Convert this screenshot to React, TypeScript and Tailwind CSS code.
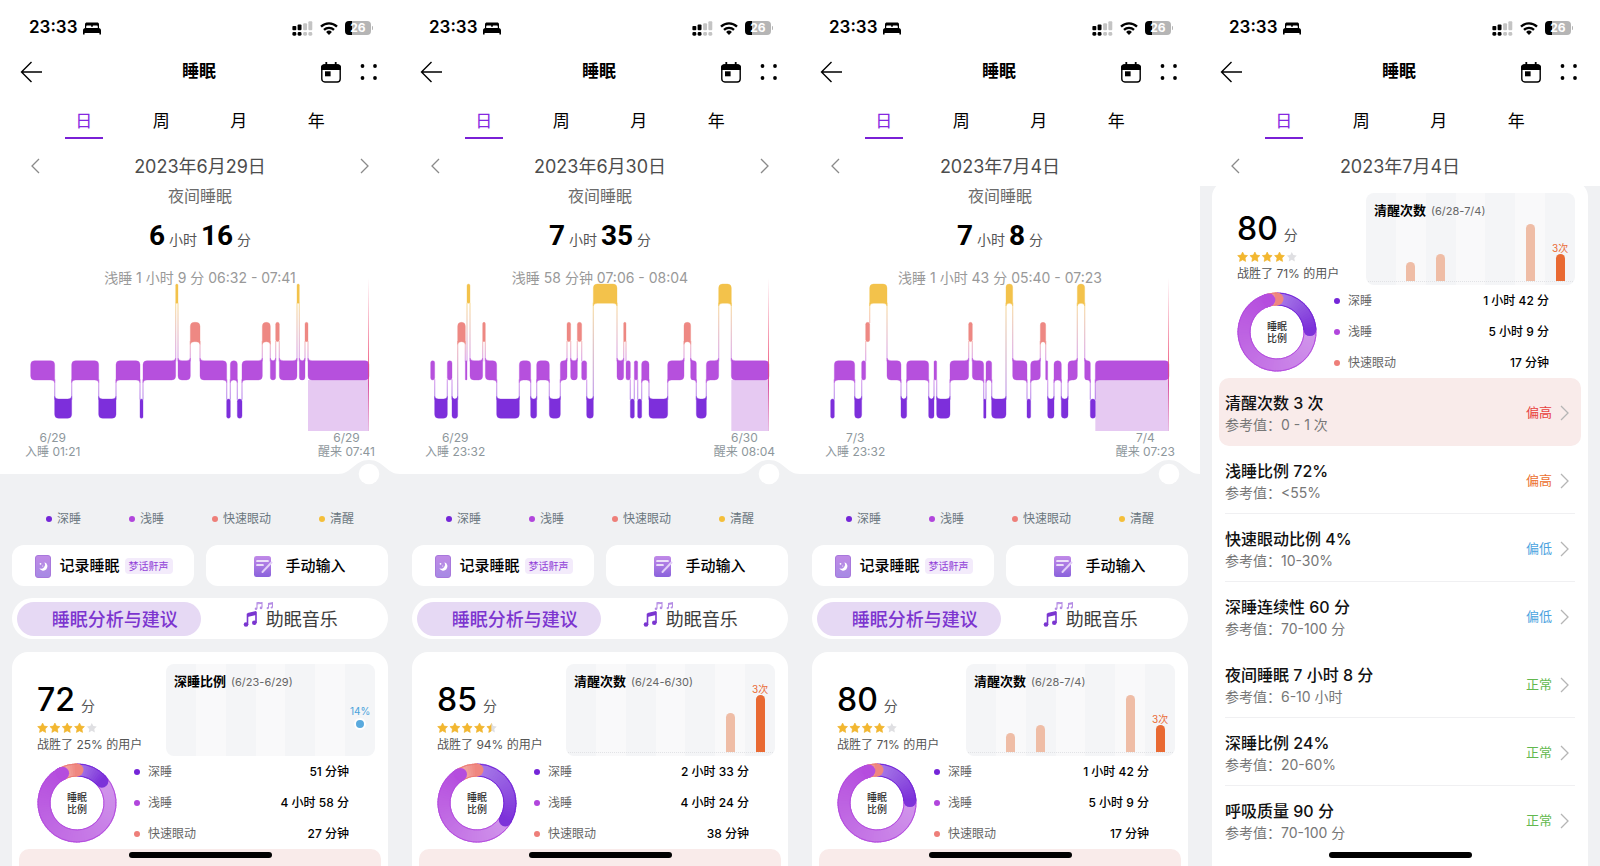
import clsx from 'clsx';

type Stage = 'A' | 'R' | 'L' | 'D';

interface Bar {
  slot: number;
  height: string;
  current?: boolean;
}

interface Score {
  points: number;
  stars: number;
  beat: number;
  trendTitle: string;
  trendRange: string;
  bars: Bar[];
  dot?: string;
  durations: [string, string, string];
  minutes: [number, number, number];
}

interface Night {
  date: string;
  hasNext: boolean;
  hours: number;
  mins: number;
  picked: string;
  stages: string;
  from: [string, string];
  to: [string, string];
  score: Score;
}

// Each stage is a letter plus the x where it ends, on a 1200 unit wide night
const NIGHTS: Night[] = [
  {
    date: '2023年6月29日',
    hasNext: true,
    hours: 6,
    mins: 16,
    picked: '浅睡 1 小时 9 分 06:32 - 07:41',
    stages:
      'L164 D215 L296 D348 L420 D429 L527 A534 L571 R600 L680 D691 L712 D726 L787 R811 L827 R838 L891 A898 L915 R924 L1107',
    from: ['6/29', '入睡 01:21'],
    to: ['6/29', '醒来 07:41'],
    score: {
      points: 72,
      stars: 4,
      beat: 25,
      trendTitle: '深睡比例',
      trendRange: '(6/23-6/29)',
      bars: [],
      dot: '14%',
      durations: ['51 分钟', '4 小时 58 分', '27 分钟'],
      minutes: [51, 298, 27],
    },
  },
  {
    date: '2023年6月30日',
    hasNext: true,
    hours: 7,
    mins: 35,
    picked: '浅睡 58 分钟 07:06 - 08:04',
    stages:
      'L104 D142 L156 D173 R196 L201 A210 L248 R256 L290 D358 L392 D410 L448 D481 L501 R512 L532 R545 L560 D580 A651 L671 R678 L691 D703 L713 D725 L747 D803 L852 R872 L889 D919 L956 A994 L1107',
    from: ['6/29', '入睡 23:32'],
    to: ['6/30', '醒来 08:04'],
    score: {
      points: 85,
      stars: 4.5,
      beat: 94,
      trendTitle: '清醒次数',
      trendRange: '(6/24-6/30)',
      bars: [
        { slot: 5, height: 'h-[39px]' },
        { slot: 6, height: 'h-[57px]', current: true },
      ],
      durations: ['2 小时 33 分', '4 小时 24 分', '38 分钟'],
      minutes: [153, 264, 38],
    },
  },
  {
    date: '2023年7月4日',
    hasNext: false,
    hours: 7,
    mins: 8,
    picked: '浅睡 1 小时 43 分 05:40 - 07:23',
    stages:
      'D103 L164 D185 L197 R209 A261 L303 D320 L386 D402 L410 D450 L506 R517 L551 D558 L575 D618 A638 L681 D692 L721 R737 L743 D762 L784 D804 L832 A854 L871 D886 L1107',
    from: ['7/3', '入睡 23:32'],
    to: ['7/4', '醒来 07:23'],
    score: {
      points: 80,
      stars: 4,
      beat: 71,
      trendTitle: '清醒次数',
      trendRange: '(6/28-7/4)',
      bars: [
        { slot: 1, height: 'h-[19px]' },
        { slot: 2, height: 'h-[27px]' },
        { slot: 5, height: 'h-[57px]' },
        { slot: 6, height: 'h-[27px]', current: true },
      ],
      durations: ['1 小时 42 分', '5 小时 9 分', '17 分钟'],
      minutes: [102, 309, 17],
    },
  },
];

const METRICS = [
  { title: '清醒次数 3 次', ref: '0 - 1 次', status: '偏高', color: 'text-[#e8403c]', alert: true, line: false },
  { title: '浅睡比例 72%', ref: '<55%', status: '偏高', color: 'text-[#ec7030]', line: true },
  { title: '快速眼动比例 4%', ref: '10-30%', status: '偏低', color: 'text-[#4ba3e0]', line: true },
  { title: '深睡连续性 60 分', ref: '70-100 分', status: '偏低', color: 'text-[#4ba3e0]', line: false },
  { title: '夜间睡眠 7 小时 8 分', ref: '6-10 小时', status: '正常', color: 'text-[#62b84e]', line: true },
  { title: '深睡比例 24%', ref: '20-60%', status: '正常', color: 'text-[#62b84e]', line: true },
  { title: '呼吸质量 90 分', ref: '70-100 分', status: '正常', color: 'text-[#62b84e]', line: false },
];

const LEGEND = [
  { name: '深睡', dot: 'bg-[#7426d8]' },
  { name: '浅睡', dot: 'bg-[#b146dc]' },
  { name: '快速眼动', dot: 'bg-[#ee7f79]' },
  { name: '清醒', dot: 'bg-[#f4bf3a]' },
];

const STAGE_TOP: Record<Stage, number> = { A: 30, R: 145, L: 260, D: 375 };
const STAGE_COLOR: Record<Stage, string> = { A: '#f3c24b', R: '#ee8883', L: '#b650dd', D: '#7d2fdb' };
const BLOCK = 58;

function StatusBar() {
  return (
    <div className="flex h-[54px] items-center justify-between pt-0.5 pr-[27px] pl-[29px]">
      <div className="flex items-center gap-1.5">
        <span className="text-[17px] font-semibold">23:33</span>
        <svg viewBox="0 0 18 13" className="h-[13px] w-[18px]">
          <path d="M2 6V2.2C2 1 2.8.4 4 .4h10c1.200 0 2 .6 2 1.800V6h-1.200V4.600c0-.8-.5-1.200-1.200-1.200h-3c-.6 0-1 .4-1 1V5H8.400v-.6c0-.6-.4-1-1-1h-3c-.7 0-1.200.4-1.200 1.200V6z" />
          <path d="M0 8.600C0 7 .9 6 2.500 6h13C17.100 6 18 7 18 8.600V12.500h-1.600V11H1.600v1.500H0z" />
        </svg>
      </div>
      <div className="flex items-center gap-[7px]">
        <svg viewBox="0 0 62 46" className="h-[15px] w-[21px]">
          <g fill="#000">
            <rect x="0" y="15" width="12" height="13" rx="3" />
            <rect x="16" y="11" width="12" height="17" rx="3" />
            <rect x="0" y="34" width="12" height="11" rx="4" />
            <rect x="16" y="34" width="12" height="11" rx="4" />
          </g>
          <g fill="#c4c4c4">
            <rect x="33" y="7" width="12" height="21" rx="3" />
            <rect x="49" y="1" width="12" height="27" rx="3" />
            <rect x="33" y="34" width="12" height="11" rx="4" />
            <rect x="49" y="34" width="12" height="11" rx="4" />
          </g>
        </svg>
        <svg viewBox="0 0 18 13" className="h-[13px] w-[18px]" fill="none" stroke="#000" strokeWidth="2.300">
          <path d="M1 4.600a11.500 11.500 0 0 1 16 0" />
          <path d="M4 7.800a7.200 7.200 0 0 1 10 0" />
          <path d="M9 13 6.100 10a4.200 4.200 0 0 1 5.800 0z" fill="#000" stroke="none" />
        </svg>
        <div className="flex items-center gap-px">
          <div className="flex h-[14px] w-[26px] items-center justify-center rounded-[4px] bg-linear-to-r from-black from-26% to-[#b5b5b5] to-26% text-[12px] font-bold text-white">
            26
          </div>
          <div className="h-1 w-px rounded-r bg-[#b5b5b5]" />
        </div>
      </div>
    </div>
  );
}

function Chevron({ flip, className }: { flip?: boolean; className?: string }) {
  return (
    <svg viewBox="0 0 9 16" className={clsx('h-4 w-[9px]', className)} fill="none" stroke="currentColor" strokeWidth="1.300">
      <path d={flip ? 'M8 1 1 8l7 7' : 'M1 1l7 7-7 7'} />
    </svg>
  );
}

function Header({ date, hasNext }: { date: string; hasNext: boolean }) {
  return (
    <header className="bg-white">
      <StatusBar />
      <div className="grid h-9 grid-cols-[1fr_auto_1fr] items-center pr-[22px] pl-5">
        <button type="button" aria-label="返回" className="w-fit">
          <svg viewBox="0 0 22 22" className="size-[22px]" fill="none" stroke="#000" strokeWidth="1.400">
            <path d="M11.500 1 1.500 11l10 10M1.500 11H22" />
          </svg>
        </button>
        <h1 className="text-[17px] font-bold">睡眠</h1>
        <div className="flex items-center justify-end gap-[19px]">
          <button type="button" aria-label="选择日期">
            <svg viewBox="0 0 20 21" className="h-[21px] w-5">
              <rect x=".8" y="3" width="18.400" height="17" rx="3" fill="none" stroke="#000" strokeWidth="1.400" />
              <path d="M0 8V5.500C0 3.500 1.500 2.300 3.500 2.300h13c2 0 3.500 1.200 3.500 3.200V8z" />
              <path d="M5.300 0v3M14.700 0v3" stroke="#000" strokeWidth="1.800" />
              <rect x="4" y="9.300" width="5.600" height="5" />
            </svg>
          </button>
          <button type="button" aria-label="更多">
            <svg viewBox="0 0 18 16" className="h-4 w-[18px]">
              <circle cx="2.500" cy="2" r="1.900" />
              <circle cx="15" cy="2" r="1.900" />
              <circle cx="2.500" cy="14" r="1.900" />
              <circle cx="15" cy="14" r="1.900" />
            </svg>
          </button>
        </div>
      </div>
      <nav className="grid grid-cols-4 px-[45px] pt-[18px]">
        {['日', '周', '月', '年'].map((tab, i) => (
          <button
            key={tab}
            type="button"
            className={clsx(
              'w-[38px] justify-self-center border-b-2 pb-[3px] text-[17px] leading-[26px]',
              i === 0 ? 'border-[#7a20d6] text-[#8526e0]' : 'border-transparent text-black'
            )}
          >
            {tab}
          </button>
        ))}
      </nav>
      <div className="flex h-[47px] items-center justify-between px-[31px] pt-[7px] text-[#8a8a8a]">
        <button type="button" aria-label="前一天">
          <Chevron flip />
        </button>
        <span className="text-[18px] text-[#4d4d4d]">{date}</span>
        <button type="button" aria-label="后一天" className={hasNext ? '' : 'invisible'}>
          <Chevron />
        </button>
      </div>
    </header>
  );
}

function parseStages(stages: string) {
  let x = 92;
  return stages.split(' ').map((s) => {
    const block = { stage: s[0] as Stage, x0: x, x1: Number(s.slice(1)) };
    x = block.x1;
    return block;
  });
}

// Corners on the side of a neighbour flare out towards it, the others are rounded
function blockPath(x0: number, x1: number, y: number, prev: number, next: number) {
  const w = x1 - x0;
  const r = Math.min(12, w / 2);
  const f = w > 15 ? 8 : 0;
  const b = y + BLOCK;
  return [
    prev < y && w > 15 ? `M${x0} ${y - f}Q${x0 + 1} ${y} ${x0 + r} ${y}` : `M${x0} ${y + r}Q${x0} ${y} ${x0 + r} ${y}`,
    next < y && w > 15 ? `H${x1 - r}Q${x1 - 1} ${y} ${x1} ${y - f}` : `H${x1 - r}Q${x1} ${y} ${x1} ${y + r}`,
    next > y && w > 15 ? `V${b + f}Q${x1 - 1} ${b} ${x1 - r} ${b}` : `V${b - r}Q${x1} ${b} ${x1 - r} ${b}`,
    prev > y && w > 15 ? `H${x0 + r}Q${x0 + 1} ${b} ${x0} ${b + f}` : `H${x0 + r}Q${x0} ${b} ${x0} ${b - r}`,
    'Z',
  ].join('');
}

function SleepChart({ id, stages }: { id: string; stages: string }) {
  const blocks = parseStages(stages);
  const last = blocks[blocks.length - 1];

  return (
    <svg viewBox="0 0 1200 471" className="-mt-[14px] block w-full">
      <defs>
        {blocks.slice(1).map((b, i) => {
          const a = blocks[i];
          const [hi, lo] = STAGE_TOP[a.stage] < STAGE_TOP[b.stage] ? [a, b] : [b, a];
          return (
            <linearGradient key={i} id={`${id}-${i}`} x1="0" y1="0" x2="0" y2="1">
              <stop offset="0" stopColor={STAGE_COLOR[hi.stage]} />
              <stop offset="1" stopColor={STAGE_COLOR[lo.stage]} />
            </linearGradient>
          );
        })}
        <linearGradient id={`${id}-now`} x1="0" y1="0" x2="0" y2="1">
          <stop offset="0" stopColor="#ee4a72" stopOpacity="0" />
          <stop offset=".55" stopColor="#ee4a72" stopOpacity=".8" />
          <stop offset=".7" stopColor="#d63a90" stopOpacity=".8" />
          <stop offset="1" stopColor="#ee4a72" stopOpacity=".1" />
        </linearGradient>
      </defs>
      <rect x={last.x0} y="318" width={last.x1 - last.x0} height="153" fill="#e6c9f2" />
      {blocks.slice(1).map((b, i) => {
        const ya = STAGE_TOP[blocks[i].stage];
        const yb = STAGE_TOP[b.stage];
        const top = Math.min(ya, yb) + BLOCK - 2;
        return (
          <rect
            key={i}
            x={b.x0 - 2}
            y={top}
            width="4"
            height={Math.max(ya, yb) - top + 2}
            fill={`url(#${id}-${i})`}
            opacity=".45"
          />
        );
      })}
      {blocks.map((b, i) => {
        const y = STAGE_TOP[b.stage];
        const prev = i > 0 ? STAGE_TOP[blocks[i - 1].stage] : y;
        const next = i < blocks.length - 1 ? STAGE_TOP[blocks[i + 1].stage] : y;
        return (
          <path
            key={i}
            d={blockPath(b.x0, b.x1, y, prev, next)}
            fill={STAGE_COLOR[b.stage]}
            stroke={STAGE_COLOR[b.stage]}
            strokeWidth="1"
          />
        );
      })}
      <rect x="1104" y="12" width="3" height="459" fill={`url(#${id}-now)`} />
    </svg>
  );
}

function Legend() {
  return (
    <ul className="flex h-12 items-center justify-between px-[46px] text-[12px] text-[#6b7780]">
      {LEGEND.map((item) => (
        <li key={item.name} className="flex items-center gap-[5px]">
          <span className={clsx('size-1.5 rounded-full', item.dot)} />
          {item.name}
        </li>
      ))}
    </ul>
  );
}

function Actions({ id }: { id: string }) {
  return (
    <div className="space-y-3 px-3">
      <div className="grid grid-cols-2 gap-3">
        <button type="button" className="flex h-[41px] items-center justify-center rounded-xl bg-white pt-px pl-0.5">
          <svg viewBox="0 0 16 23" className="mr-2 h-[23px] w-4">
            <defs>
              <linearGradient id={`${id}-rec`} x1="0" y1="0" x2="0" y2="1">
                <stop offset="0" stopColor="#c08ae6" />
                <stop offset="1" stopColor="#a58ae4" />
              </linearGradient>
            </defs>
            <rect x=".5" y=".5" width="15" height="22" rx="2.500" fill={`url(#${id}-rec)`} stroke="#a878dc" />
            <path d="M9.500 7.300a4.300 4.300 0 1 1-5.200 6 4.200 4.200 0 0 0 5.200-6z" fill="#fff" />
            <circle cx="5.500" cy="8.800" r=".9" fill="#fff" />
            <circle cx="7.700" cy="11" r=".6" fill="#fff" />
          </svg>
          <span className="text-[15px] font-medium">记录睡眠</span>
          <span className="ml-[5px] rounded bg-[#f3ebfb] px-1 text-[10px] leading-4 text-[#9243d8]">梦话鼾声</span>
        </button>
        <button
          type="button"
          className="flex h-[41px] items-center justify-center gap-3 rounded-xl bg-white pt-px pl-1.5"
        >
          <svg viewBox="0 0 19 21" className="h-[21px] w-[19px]">
            <defs>
              <linearGradient id={`${id}-pen`} x1="0" y1="0" x2="0" y2="1">
                <stop offset="0" stopColor="#c18ae8" />
                <stop offset="1" stopColor="#8a62dc" />
              </linearGradient>
            </defs>
            <rect width="17" height="21" rx="2.500" fill={`url(#${id}-pen)`} />
            <path d="M3 5h11M3 9h6" stroke="#fff" strokeWidth="1.700" strokeLinecap="round" />
            <path d="m8.500 16 9-9.500" stroke="#e3cff8" strokeWidth="2" strokeLinecap="round" />
          </svg>
          <span className="text-[15px] font-medium">手动输入</span>
        </button>
      </div>
      <div className="grid h-[41px] grid-cols-2 rounded-full bg-white p-1 pl-[5px]">
        <button type="button" className="rounded-full bg-[#e6d9f4] pl-3 text-[18px] font-medium text-[#7c35cf]">
          睡眠分析与建议
        </button>
        <button type="button" className="flex items-center justify-center gap-[7px] pr-1 text-[18px] text-[#3d3d3d]">
          <svg viewBox="0 0 30 34" className="-mr-[24px] h-[34px] w-[30px] self-start">
            <path d="M4.500 23V12.500L13 10.500V21" fill="none" stroke="#7a35d0" strokeWidth="1.600" />
            <path d="M4.500 11 13 9v4L4.500 15z" fill="#7a35d0" />
            <circle cx="3" cy="22.500" r="2.300" fill="#7a35d0" />
            <circle cx="11.300" cy="20.700" r="2.300" fill="#7a35d0" />
            <g fill="none" stroke="#b48ce4" strokeWidth="1.100">
              <path d="M14 6.500V.8l5-.8v5.500M25.500 6V1.400l4-.7v4.600M14 2l5-.8M25.500 2.500l4-.7" />
            </g>
            <g fill="#b48ce4">
              <circle cx="13" cy="6.800" r="1.300" />
              <circle cx="18" cy="5.900" r="1.300" />
              <circle cx="24.700" cy="6.200" r="1.100" />
              <circle cx="28.700" cy="5.500" r="1.100" />
            </g>
          </svg>
          <span className="pl-2.5">助眠音乐</span>
        </button>
      </div>
    </div>
  );
}

const STAR = 'M5 0 6.530 3.100 9.950 3.600 7.470 6 8.060 9.400 5 7.800 1.940 9.400 2.530 6 .05 3.600 3.470 3.100z';

function Stars({ id, value }: { id: string; value: number }) {
  return (
    <svg viewBox="0 0 60 10" className="h-2.5 w-[60px]" role="img" aria-label={`${value} 星`}>
      <clipPath id={`${id}-stars`}>
        <rect width={value * 12.3 - (value % 1 ? 1 : 0)} height="10" />
      </clipPath>
      {[0, 1, 2, 3, 4].map((i) => (
        <path key={i} d={STAR} transform={`translate(${i * 12.3 + 0.6} 0)`} fill="#dfdfe2" />
      ))}
      <g clipPath={`url(#${id}-stars)`} strokeLinejoin="round">
        {[0, 1, 2, 3, 4].map((i) => (
          <path
            key={i}
            d={STAR}
            transform={`translate(${i * 12.3 + 0.6} 0)`}
            fill="#f3b72f"
            stroke="#f3b72f"
            strokeWidth=".6"
          />
        ))}
      </g>
    </svg>
  );
}

function point(angle: number, r: number) {
  const rad = ((angle - 90) * Math.PI) / 180;
  return [40 + r * Math.cos(rad), 40 + r * Math.sin(rad)];
}

function mix(from: number[], to: number[], t: number) {
  return `rgb(${from.map((c, i) => Math.round(c + (to[i] - c) * t)).join(',')})`;
}

// A ring piece whose colour runs along the arc, closed by a round cap
function Arc({ start, end, from, to, edge }: { start: number; end: number; from: number[]; to: number[]; edge: string }) {
  const n = Math.max(2, Math.ceil((end - start) / 4));
  const step = (end - start) / n;
  const arc = (a: number, b: number, r: number) => {
    const [x0, y0] = point(a, r);
    const [x1, y1] = point(b, r);
    return `M${x0} ${y0}A${r} ${r} 0 ${b - a > 180 ? 1 : 0} 1 ${x1} ${y1}`;
  };
  const [cx, cy] = point(end, 33);
  return (
    <g fill="none">
      <circle cx={cx} cy={cy} r="6.500" fill={mix(from, to, 1)} />
      {Array.from({ length: n }, (_, i) => (
        <path
          key={i}
          d={arc(start + i * step, Math.min(end, start + (i + 1) * step + 2), 33)}
          stroke={mix(from, to, i / (n - 1))}
          strokeWidth="13"
        />
      ))}
      <path d={arc(start, end, 39)} stroke={edge} strokeWidth="1" />
      <path d={arc(start, end, 27)} stroke={edge} strokeWidth="1" />
    </g>
  );
}

function Donut({ minutes }: { minutes: [number, number, number] }) {
  const total = minutes[0] + minutes[1] + minutes[2];
  const deep = (minutes[0] / total) * 360;
  const light = deep + (minutes[1] / total) * 360;
  const lightEnd = [181, 77, 222];

  return (
    <div className="grid size-20 place-items-center">
      <svg viewBox="0 0 80 80" className="size-20 [grid-area:1/1]">
        <Arc start={deep} end={light} from={[209, 150, 235]} to={lightEnd} edge="#b44cdf" />
        <Arc start={0} end={deep} from={[168, 124, 232]} to={[125, 50, 217]} edge="#7426d8" />
        <Arc start={light} end={360} from={[244, 178, 172]} to={[239, 134, 127]} edge="#ec7b74" />
        <Arc start={light - 8} end={light} from={lightEnd} to={lightEnd} edge="#b44cdf" />
      </svg>
      <span className="w-6 text-center text-[10px] leading-3 font-medium text-[#333] [grid-area:1/1]">睡眠 比例</span>
    </div>
  );
}

function TrendPanel({ score }: { score: Score }) {
  return (
    <div className="grid h-[92px] overflow-hidden rounded-lg bg-[#f4f5f7]">
      <div className="grid grid-cols-7 [grid-area:1/1]">
        {[0, 1, 2, 3, 4, 5, 6].map((slot) => {
          const bar = score.bars.find((b) => b.slot === slot);
          return (
            <div
              key={slot}
              className={clsx('flex flex-col items-center justify-end pb-1', slot % 2 === 1 && 'bg-[#f9f9fa]')}
            >
              {bar?.current && <span className="text-[10px] leading-3 whitespace-nowrap text-[#ea6a35]">3次</span>}
              {bar && (
                <span
                  className={clsx('w-[9px] rounded-t-full', bar.height, bar.current ? 'bg-[#e96a33]' : 'bg-[#efbda6]')}
                />
              )}
              {score.dot && slot === 6 && (
                <>
                  <span className="text-[10px] leading-[14px] text-[#4ba3dc]">{score.dot}</span>
                  <span className="mb-[22px] size-3 rounded-full border-2 border-white bg-[#5aaade]" />
                </>
              )}
            </div>
          );
        })}
      </div>
      {score.bars.length > 0 && (
        <div className="mb-[3px] self-end border-b border-dotted border-[#e2e3e6] [grid-area:1/1]" />
      )}
      <div className="flex h-9 items-center gap-[5px] pl-2 [grid-area:1/1]">
        <span className="text-[13px] font-bold">{score.trendTitle}</span>
        <span className="text-[11px] text-[#666]">{score.trendRange}</span>
      </div>
    </div>
  );
}

function ScoreCard({ id, score, children }: { id: string; score: Score; children: React.ReactNode }) {
  return (
    <section className="mx-3 rounded-2xl bg-white pt-3 pb-8">
      <div className="grid grid-cols-[154px_1fr] pr-[13px]">
        <div className="pt-[17px] pl-[25px]">
          <div className="flex items-baseline gap-1.5">
            <span className="text-[32px] leading-[38px] font-medium">{score.points}</span>
            <span className="text-[14px] text-[#555]">分</span>
          </div>
          <div className="flex h-[18px] items-center">
            <Stars id={id} value={score.stars} />
          </div>
          <p className="text-[12px] leading-4 whitespace-nowrap text-[#555]">战胜了 {score.beat}% 的用户</p>
        </div>
        <TrendPanel score={score} />
      </div>
      <div className="flex items-center gap-[9px] pr-[39px] pl-[25px]">
        <Donut minutes={score.minutes} />
        <ul className="flex-1 pl-2 text-[12px]">
          {score.durations.map((duration, i) => (
            <li key={i} className="flex h-[31px] items-center gap-2">
              <span className={clsx('size-1.5 rounded-full', LEGEND[i].dot)} />
              <span className="flex-1 text-[#666]">{LEGEND[i].name}</span>
              <span className="font-medium text-black">{duration}</span>
            </li>
          ))}
        </ul>
      </div>
      {children}
    </section>
  );
}

function MetricList() {
  return (
    <ul className="px-[7px]">
      {METRICS.map((m) => (
        <li key={m.title} className={clsx('px-1.5', m.alert && 'rounded-[10px] bg-[#f9ebea]')}>
          <button
            type="button"
            className={clsx(
              'flex h-[68px] w-full items-center justify-between border-b pt-0.5 pr-1.5 text-left',
              m.line ? 'border-[#f0f0f2]' : 'border-transparent'
            )}
          >
            <span>
              <span className="block text-[16px] leading-6 font-medium text-[#111]">{m.title}</span>
              <span className="block text-[14px] leading-5 text-[#777]">参考值：{m.ref}</span>
            </span>
            <span className={clsx('flex items-center gap-2 text-[13px]', m.color)}>
              {m.status}
              <Chevron className="text-[#b5b5b5]" />
            </span>
          </button>
        </li>
      ))}
    </ul>
  );
}

function HomeIndicator() {
  return (
    <div className="absolute inset-x-0 bottom-2 flex justify-center">
      <div className="h-1.5 w-[143px] rounded-full bg-black" />
    </div>
  );
}

function DayScreen({ id, night }: { id: string; night: Night }) {
  return (
    <div className="relative h-screen overflow-hidden bg-[#f0f1f3]">
      <Header date={night.date} hasNext={night.hasNext} />
      <div className="bg-white">
        <p className="text-center text-[16px] leading-5 text-[#6b6b6b]">夜间睡眠</p>
        <div className="flex h-[62px] items-baseline justify-center gap-1 pt-2.5 text-[14px] text-[#555]">
          <b className="font-['Roboto',sans-serif] text-[28px] leading-10 text-black">{night.hours}</b>
          小时
          <b className="font-['Roboto',sans-serif] text-[28px] leading-10 text-black">{night.mins}</b>
          分
        </div>
        <p className="text-center text-[14px] leading-5 text-[#999]">{night.picked}</p>
        <SleepChart id={id} stages={night.stages} />
        <div className="flex justify-between px-[25px] text-center text-[12px] leading-[14px] text-[#8e979c]">
          <p>
            {night.from[0]}
            <br />
            {night.from[1]}
          </p>
          <p>
            {night.to[0]}
            <br />
            {night.to[1]}
          </p>
        </div>
      </div>
      <svg viewBox="0 0 400 26" className="block w-full">
        <path d="M0 0H400V15C386 15 384 1 369 1C354 1 352 15 338 15H0Z" fill="#fff" />
        <circle cx="369" cy="15" r="10.300" fill="#fff" />
      </svg>
      <div className="pt-[10px] pb-0.5">
        <Legend />
      </div>
      <Actions id={id} />
      <div className="pt-[13px]">
        <ScoreCard id={id} score={night.score}>
          <div className="mx-[7px] h-[68px] rounded-[10px] bg-[#f9ebea]" />
        </ScoreCard>
      </div>
      <HomeIndicator />
    </div>
  );
}

function DetailScreen({ id, night }: { id: string; night: Night }) {
  return (
    <div className="relative flex h-screen flex-col overflow-hidden bg-[#f0f1f3]">
      <Header date={night.date} hasNext={night.hasNext} />
      <div className="min-h-0 flex-1 overflow-hidden">
        <div className="-mt-[5px]">
          <ScoreCard id={id} score={night.score}>
            <MetricList />
          </ScoreCard>
        </div>
      </div>
      <HomeIndicator />
    </div>
  );
}

export default function App() {
  return (
    <main className="grid grid-cols-4 bg-white font-['Inter','Noto_Sans_CJK_SC',sans-serif] text-black" lang="zh-CN">
      {NIGHTS.map((night, i) => (
        <DayScreen key={night.date} id={`day${i}`} night={night} />
      ))}
      <DetailScreen id="detail" night={NIGHTS[2]} />
    </main>
  );
}
